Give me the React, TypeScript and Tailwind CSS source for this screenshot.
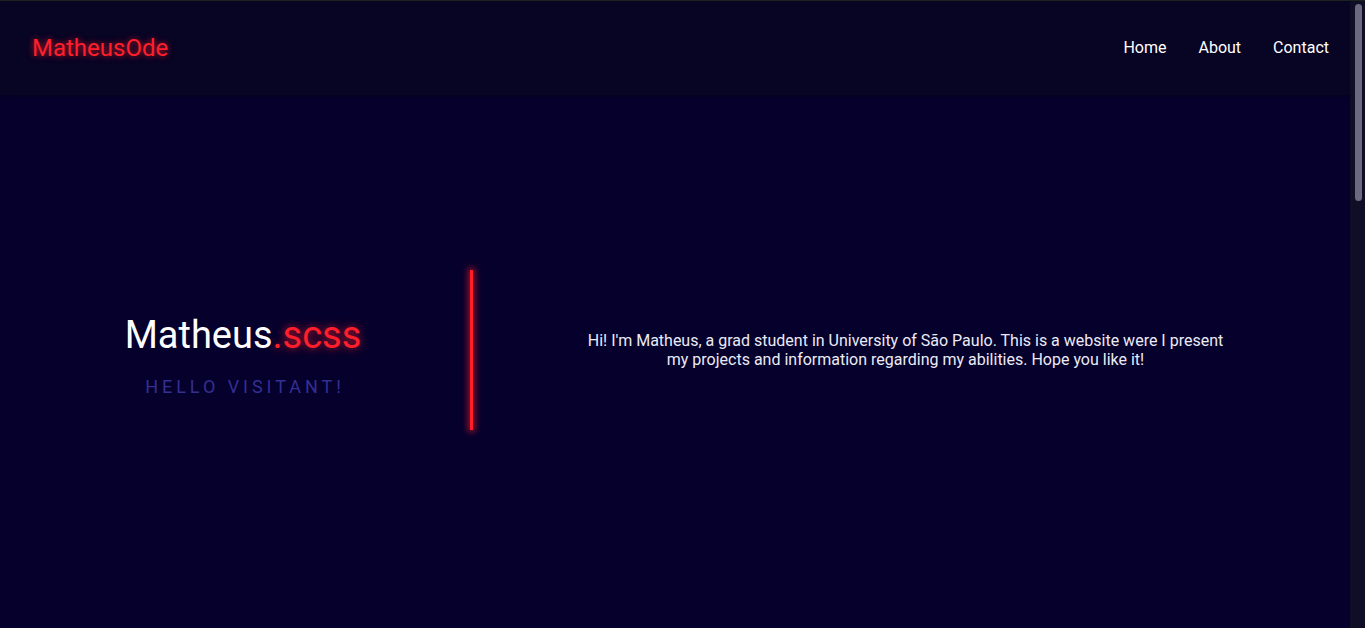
const links = ["Home", "About", "Contact"];

function Header() {
  return (
    <header className="flex h-[95px] items-center justify-between border-t border-[#1c221c] bg-[#080424] pl-8 pr-[21px] shadow-[0_1px_4px_rgba(0,0,0,0.3)]">
      <a className="text-[24px] text-[#ff1f2b] [text-shadow:0_0_6px_rgba(255,30,40,0.75)]">
        MatheusOde
      </a>
      <nav className="flex items-center gap-8">
        {links.map((link) => (
          <a key={link} className="text-[16px] text-white">
            {link}
          </a>
        ))}
      </nav>
    </header>
  );
}

function Hero() {
  return (
    <section className="flex h-[510px] items-center">
      <div className="flex w-[470px] flex-col items-center pl-[16px] pt-[12px]">
        <h1 className="text-[38px] leading-tight text-white">
          Matheus
          <span className="text-[#ff1f2b] [text-shadow:0_0_8px_rgba(255,30,40,0.8)]">.scss</span>
        </h1>
        <p className="mt-[13px] pl-[4px] text-[18px] uppercase tracking-[0.22em] text-[#332f93]">
          Hello visitant!
        </p>
      </div>
      <div className="h-[160px] w-[3px] bg-[#ff1f2b] shadow-[0_0_6px_2px_rgba(255,30,40,0.6)]" />
      <div className="flex flex-1 justify-center pr-[12px]">
        <p className="max-w-[650px] text-center text-[16px] leading-[19px] text-[#ebebf5]">
          Hi! I'm Matheus, a grad student in University of São Paulo. This is a website were I present my
          projects and information regarding my abilities. Hope you like it!
        </p>
      </div>
    </section>
  );
}

// stand-in for the page scrollbar seen in the screenshot
function Scrollbar() {
  return (
    <aside className="w-[15px] shrink-0 border-t border-[#1c221c] bg-[#100d27] pt-[3px]">
      <div className="ml-[5px] h-[197px] w-[7px] rounded-full bg-[#6b6880]" />
    </aside>
  );
}

export default function App() {
  return (
    <div className="flex h-screen overflow-hidden bg-[#06002c] font-['Roboto',sans-serif]">
      <div className="flex-1">
        <Header />
        <main>
          <Hero />
          <section className="h-[1400px]" />
        </main>
      </div>
      <Scrollbar />
    </div>
  );
}
